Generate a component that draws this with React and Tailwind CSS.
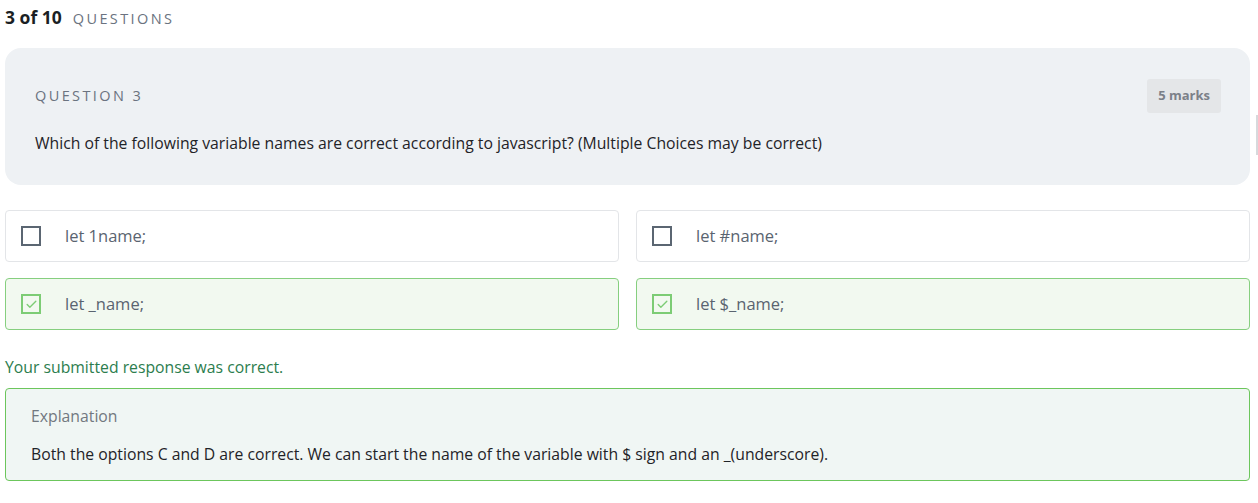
import { Check } from "lucide-react";

const options = [
  { id: "A", label: "let 1name;", checked: false },
  { id: "B", label: "let #name;", checked: false },
  { id: "C", label: "let _name;", checked: true },
  { id: "D", label: "let $_name;", checked: true },
];

const Option = ({ label, checked }) => (
  <div
    className={`flex items-center h-[52px] px-[15px] rounded-[4px] border ${
      checked
        ? "border-[#86cf7f] bg-[#f2f9f0]"
        : "border-[#e3e5e8] bg-white"
    }`}
  >
    <span
      className={`w-[20px] h-[20px] flex items-center justify-center border-2 ${
        checked ? "border-[#7dcc75]" : "border-[#5b6672]"
      }`}
    >
      {checked && <Check size={13} strokeWidth={2.5} className="text-[#7dcc75]" />}
    </span>
    <span className="ml-[24px] text-[16.5px] text-[#5a6470]">{label}</span>
  </div>
);

const App = () => {
  return (
    <div
      className="w-[1258px] h-[503px] bg-white text-[#1f2328] overflow-hidden relative"
      style={{ fontFamily: "'Open Sans', 'Noto Sans', sans-serif" }}
    >
      {/* Header */}
      <div className="flex items-baseline gap-[11px] pl-[5px] pt-[4px] h-[48px]">
        <span className="text-[17.5px] font-bold text-[#1b1f24]">3 of 10</span>
        <span className="text-[14.5px] tracking-[2.4px] text-[#6b7380]">QUESTIONS</span>
      </div>

      <div className="pl-[5px] pr-[8px]">
        {/* Question card */}
        <div className="bg-[#eef1f4] rounded-[16px] h-[137px] px-[30px] pt-[31px]">
          <div className="flex items-center justify-between">
            <span className="text-[14.5px] tracking-[2.4px] text-[#6b7380]">QUESTION 3</span>
            <span className="bg-[#e4e6e8] rounded-[3px] px-[11px] h-[34px] flex items-center text-[13px] font-bold text-[#7b8088] mr-[-1px]">
              5 marks
            </span>
          </div>
          <p className="mt-[19px] text-[15.75px] text-[#1f2328]">
            Which of the following variable names are correct according to javascript? (Multiple Choices may be correct)
          </p>
        </div>

        {/* Options */}
        <div className="grid grid-cols-2 gap-x-[17px] gap-y-[16px] mt-[25px]">
          {options.map((o) => (
            <Option key={o.id} label={o.label} checked={o.checked} />
          ))}
        </div>

        <p className="mt-[26px] text-[15.75px] text-[#2c7d4e]">Your submitted response was correct.</p>

        {/* Explanation */}
        <div className="mt-[8px] border border-[#6cc65c] bg-[#f0f6f4] rounded-[4px] h-[93px] px-[25px] pt-[16px]">
          <p className="text-[15.75px] text-[#727880]">Explanation</p>
          <p className="mt-[15px] text-[15.75px] text-[#1f2328]">
            Both the options C and D are correct. We can start the name of the variable with $ sign and an _(underscore).
          </p>
        </div>
      </div>

      <div className="absolute right-0 top-[115px] w-[2px] h-[40px] bg-[#d7d9dc]" />
    </div>
  );
};

export default App;
